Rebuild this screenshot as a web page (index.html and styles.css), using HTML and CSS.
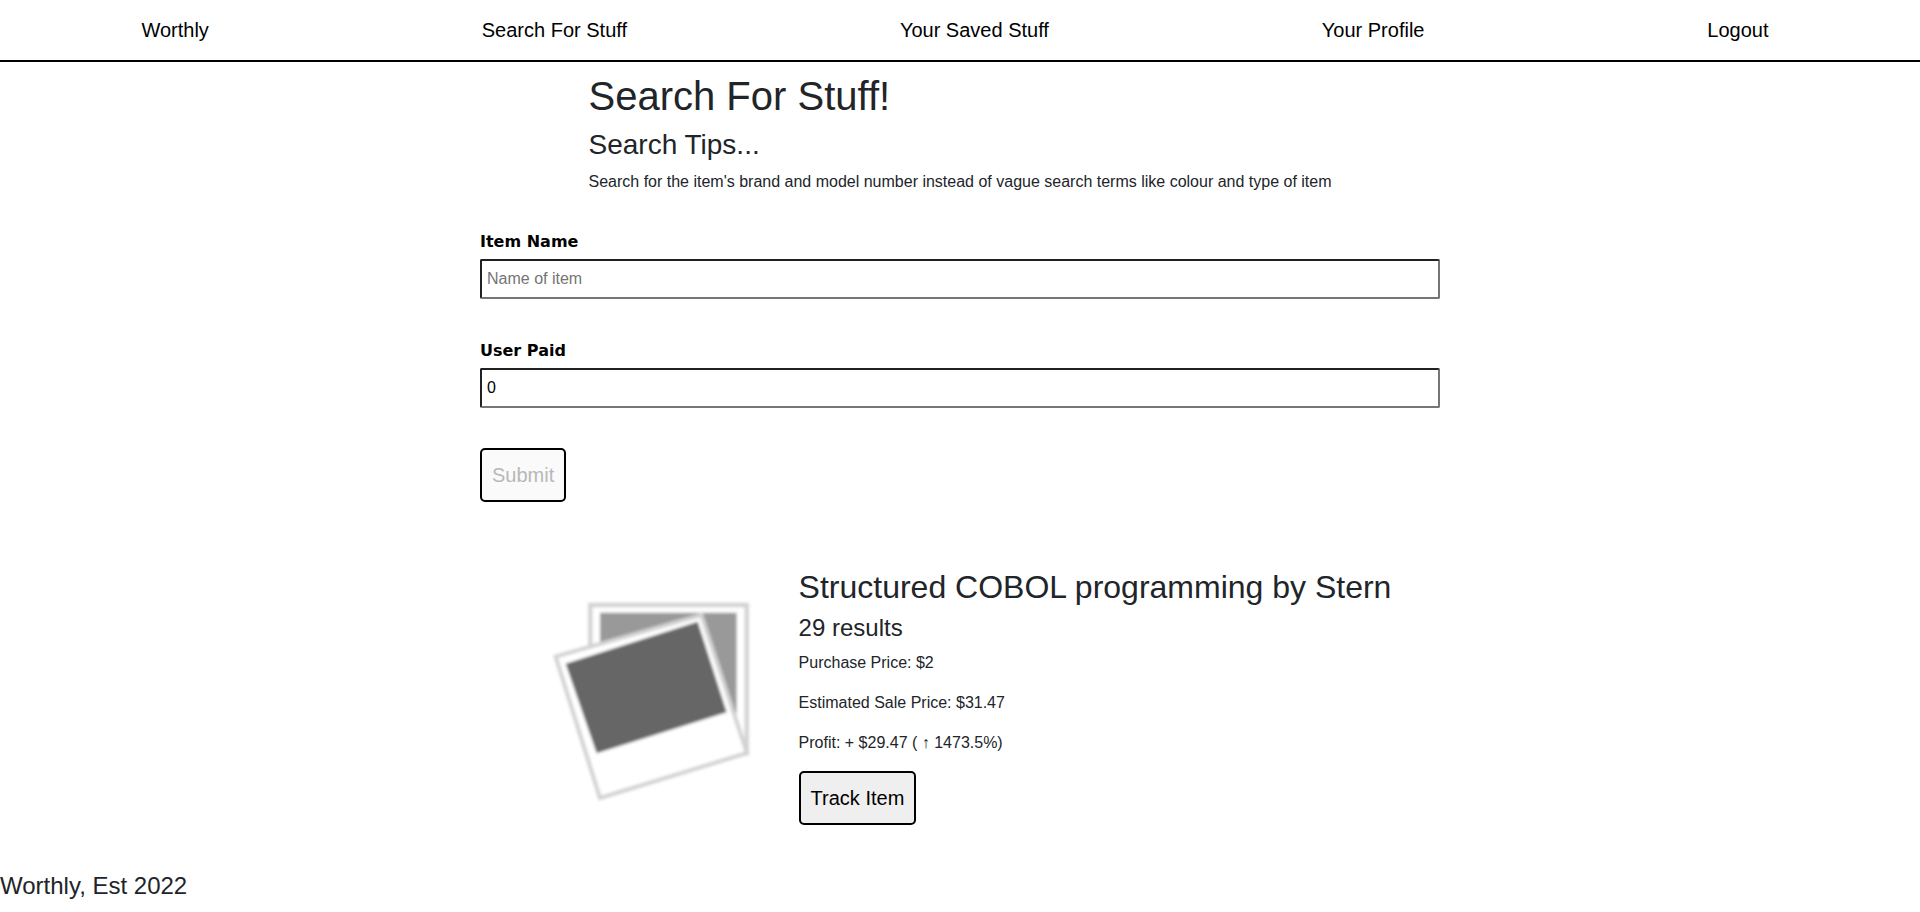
FILE: index.html
```html
<!DOCTYPE html>
<html lang="en">
<head>
<meta charset="utf-8">
<title>Worthly</title>
<link rel="stylesheet" href="styles.css">
</head>
<body>
<nav class="navbar">
  <a href="#">Worthly</a>
  <a href="#">Search For Stuff</a>
  <a href="#">Your Saved Stuff</a>
  <a href="#">Your Profile</a>
  <a class="logout" href="#">Logout</a>
</nav>
<main>
  <header class="intro">
    <h1>Search For Stuff!</h1>
    <h2>Search Tips...</h2>
    <p>Search for the item's brand and model number instead of vague search terms like colour and type of item</p>
  </header>
  <form class="search-form">
    <div class="field">
      <label for="item-name">Item Name</label>
      <input id="item-name" type="text" placeholder="Name of item">
    </div>
    <div class="field">
      <label for="user-paid">User Paid</label>
      <input id="user-paid" type="number" value="0">
    </div>
    <button class="btn" type="submit" disabled>Submit</button>
  </form>
  <section class="result">
    <svg class="thumb" viewBox="27 51 720 720" role="img" aria-label="Item photo">
      <defs><filter id="soft"><feGaussianBlur stdDeviation="4"/></filter></defs>
      <g filter="url(#soft)">
        <path d="M211 135H680V580H211Z" fill="#fff" stroke="#d2d2d2" stroke-width="13"/>
        <path d="M240 158H650V460H240Z" fill="#999"/>
        <path d="M107 290L544 165L681 579L240 714Z" fill="#fff" stroke="#d2d2d2" stroke-width="12"/>
        <path d="M137 311L533 185L620 457L230 580Z" fill="#666"/>
      </g>
    </svg>
    <div class="details">
      <h3>Structured COBOL programming by Stern</h3>
      <h4>29 results</h4>
      <p>Purchase Price: $2</p>
      <p>Estimated Sale Price: $31.47</p>
      <p>Profit: + $29.47 ( ↑ 1473.5%)</p>
      <button class="btn" type="button">Track Item</button>
    </div>
  </section>
</main>
<footer class="footer">Worthly, Est 2022</footer>
</body>
</html>
```

FILE: styles.css
```css
*, *::before, *::after { box-sizing: border-box; }

body {
  margin: 0;
  font-family: Arial, "Liberation Sans", sans-serif;
  font-size: 16px;
  line-height: 24px;
  color: #212529;
  background: #fff;
}

h1, h2, h3, h4 { margin: 0 0 8px; font-weight: 400; }
h1 { font-size: 40px; line-height: 48px; }
h2 { font-size: 28px; line-height: 34px; }
h3 { font-size: 32px; line-height: 38px; }
h4 { font-size: 24px; line-height: 28px; }
p { margin: 0 0 16px; }

.navbar {
  display: flex;
  justify-content: space-around;
  padding: 15px 5px;
  border-bottom: 2px solid #000;
  font-size: 20px;
  line-height: 30px;
}
.navbar a { color: #000; text-decoration: none; }
.navbar .logout { padding: 0 10px; }

.intro { width: fit-content; margin: 0 auto; padding-top: 10px; }

.search-form {
  display: flex;
  flex-direction: column;
  align-items: flex-start;
  gap: 40px;
  width: 50%;
  margin: 0 auto;
  padding-top: 20px;
}
.field { display: flex; flex-direction: column; gap: 5px; width: 100%; }
.field label {
  font-family: "Arial Black", "DejaVu Sans", sans-serif;
  font-weight: 900;
  color: #000;
}
.field input {
  width: 100%;
  height: 40px;
  padding: 5px;
  border: 2px inset #767676;
  border-radius: 2px;
  background: #fff;
  color: #000;
  font: inherit;
}
.field input::placeholder { color: #757575; }
.field input[type="number"] { appearance: textfield; }

.btn {
  padding: 10px;
  border: 2px solid #000;
  border-radius: 5px;
  background: #efefef;
  color: #000;
  font-family: inherit;
  font-size: 20px;
  line-height: 30px;
}
.btn:disabled { background: #fafafa; color: #b8b8b8; }

.result {
  display: flex;
  justify-content: center;
  align-items: center;
  gap: 30px;
  margin-top: 66px;
}
.thumb { width: 240px; height: 240px; }
.details h4 { margin-bottom: 9px; }

.footer { margin-top: 46px; font-size: 24px; line-height: 29px; }
```
